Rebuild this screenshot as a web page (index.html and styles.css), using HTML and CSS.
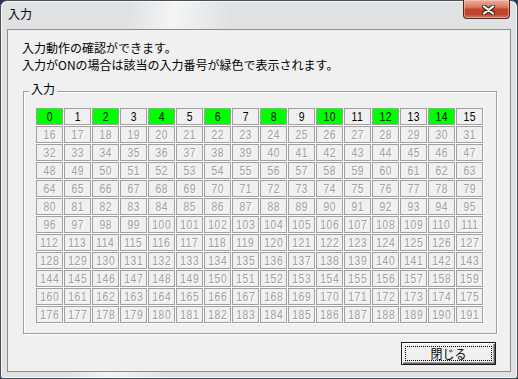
FILE: index.html
```html
<!DOCTYPE html>
<html lang="ja">
<head>
<meta charset="utf-8">
<title>入力</title>
<link rel="stylesheet" href="styles.css">
</head>
<body>
<div class="window">
  <div class="titlebar">
    <span class="title">入力</span>
    <div class="close">
      <svg width="13" height="10" viewBox="0 0 13 10">
        <path d="M2 1.5 L11 8.5 M11 1.5 L2 8.5" stroke="#3a2a26" stroke-width="4.2" stroke-linecap="round"/>
        <path d="M2 1.5 L11 8.5 M11 1.5 L2 8.5" stroke="#ffffff" stroke-width="2.2" stroke-linecap="round"/>
      </svg>
    </div>
  </div>
  <div class="client">
    <div class="msg">
      <div>入力動作の確認ができます。</div>
      <div>入力がONの場合は該当の入力番号が緑色で表示されます。</div>
    </div>
    <div class="group">
      <span class="group-label">入力</span>
      <div class="grid" id="grid"></div>
    </div>
    <div class="footer">
      <div class="btn"><span class="focus">閉じる</span></div>
    </div>
  </div>
</div>
<script src="script.js"></script>
</body>
</html>
```
FILE: styles.css
```css
html, body {
  margin: 0;
  padding: 0;
  background: #1d3657;
}
body {
  width: 518px;
  height: 379px;
  overflow: hidden;
  font-family: "Noto Sans CJK JP", "Noto Sans", sans-serif;
}
.window {
  box-sizing: border-box;
  width: 518px;
  height: 379px;
  border: 1px solid #4a4f55;
  border-radius: 7px 7px 3px 3px;
  background: linear-gradient(100deg, rgba(255,255,255,0) 22%, rgba(255,255,255,0.65) 30%, rgba(255,255,255,0) 40%), #dfe1e3;
  box-shadow: inset 0 0 0 1px rgba(255,255,255,0.7);
  display: flex;
  flex-direction: column;
}
.titlebar {
  height: 28px;
  display: flex;
  align-items: flex-start;
}
.title {
  margin: 6px 0 0 7px;
  font-size: 12px;
  line-height: 14px;
  color: #000;
}
.close {
  margin: -1px 7px 0 auto;
  width: 47px;
  height: 19px;
  box-sizing: border-box;
  border: 1px solid #5a2418;
  border-top: none;
  border-radius: 0 0 4px 4px;
  background: linear-gradient(#eab0a2 0%, #d87a63 40%, #c5432a 52%, #c0412a 78%, #d7745b 100%);
  box-shadow: inset 0 0 0 1px rgba(255,220,210,0.45);
  display: flex;
  align-items: center;
  justify-content: center;
}
.close svg {
  margin: 2px 0 0 3px;
}
.client {
  margin: 0 6px;
  width: 504px;
  height: 343px;
  box-sizing: border-box;
  border: 1px solid #8c8c8c;
  background: #f0f0f0;
  display: flex;
  flex-direction: column;
}
.msg {
  margin: 9px 0 0 14px;
  font-size: 12px;
  line-height: 17px;
  color: #000;
}
.group {
  margin: 18px 13px 0 15px;
  height: 243px;
  box-sizing: border-box;
  border: 1px solid #a0a0a0;
  box-shadow: inset 1px 1px 0 #fff, 1px 1px 0 #fff;
  display: flex;
  flex-direction: column;
  align-items: flex-start;
}
.group-label {
  margin: -9px 0 0 5px;
  padding: 0 2px;
  background: #f0f0f0;
  font-size: 12px;
  line-height: 12px;
  color: #000;
}
.grid {
  margin: 13px 0 0 12px;
  display: grid;
  grid-template-columns: repeat(16, 27px);
  grid-auto-rows: 17px;
  gap: 1px;
  padding: 0 1px 1px 0;
  background: #fff;
}
.cell {
  box-sizing: border-box;
  border: 1px solid #a0a0a0;
  background: #f0f0f0;
  display: flex;
  justify-content: center;
  align-items: center;
  font-family: "Liberation Sans", sans-serif;
  font-size: 13px;
  line-height: 15px;
  color: #a0a0a0;
  text-shadow: 1px 1px 0 #fff;
}
.num {
  display: inline-block;
  transform: scaleX(0.8);
  letter-spacing: 0.6px;
}
.cell.active {
  color: #000;
  text-shadow: none;
}
.cell.on {
  background: #00ff00;
}
.footer {
  margin: 8px 14px 0 0;
  display: flex;
  justify-content: flex-end;
}
.btn {
  width: 95px;
  height: 23px;
  box-sizing: border-box;
  border: 1px solid #1a1a1a;
  background: #f0f0f0;
  box-shadow: inset 1px 1px 0 #fff, inset -1px -1px 0 #646464, inset -2px -2px 0 #a0a0a0;
  padding: 3px;
  display: flex;
}
.focus {
  flex: 1;
  border: 1px dotted #000;
  display: flex;
  align-items: center;
  justify-content: center;
  font-size: 12px;
  line-height: 12px;
  color: #000;
}
```
FILE: script.js
```js
var grid = document.getElementById('grid');
for (var i = 0; i < 192; i++) {
  var c = document.createElement('div');
  c.className = 'cell' + (i < 16 ? ' active' : '') + (i < 16 && i % 2 === 0 ? ' on' : '');
  var s = document.createElement('span');
  s.className = 'num';
  s.textContent = String(i);
  c.appendChild(s);
  grid.appendChild(c);
}
```
